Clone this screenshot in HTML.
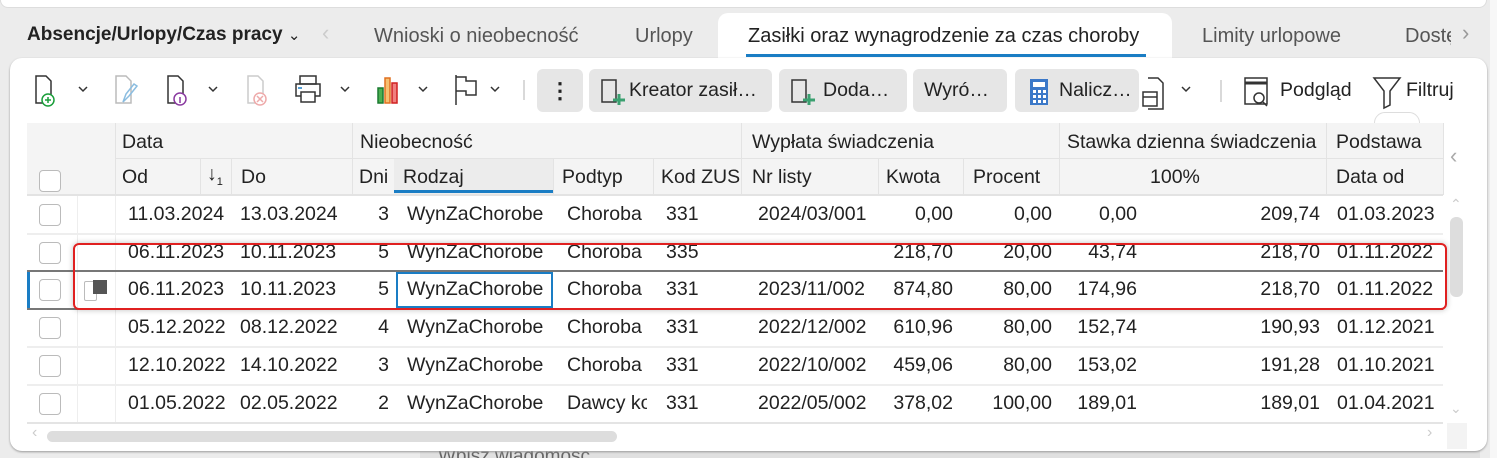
<!DOCTYPE html>
<html><head><meta charset="utf-8"><style>
*{box-sizing:border-box;margin:0;padding:0}
html,body{overflow:hidden}
body{width:1497px;height:458px;background:#ececec;font-family:"Liberation Sans",sans-serif;color:#222;position:relative;overflow:hidden}
.a{position:absolute;white-space:nowrap}
.t{font-size:20px;color:#555}
.h{font-size:19.5px;color:#222}
.d{font-size:19.5px;color:#222}
.r{text-align:right}
.cb{position:absolute;width:22px;height:22px;border:1.5px solid #bbb;border-radius:4px;background:#fff}
.btn{position:absolute;background:#e6e6e6;border-radius:6px;height:43px;top:69px;font-size:19.5px;line-height:43px}
.hl{position:absolute;background:#e3e3e3}
</style></head><body>
<div class="a" style="left:0;top:-10px;width:1487px;height:18px;background:#fff;border:1px solid #ddd;border-radius:8px"></div>
<div class="a" style="left:1490px;top:0;width:7px;height:458px;background:#f7f7f7"></div>
<div class="a" style="left:420px;top:440px;width:1060px;height:18px;background:#e0e0e0"></div>
<div class="a" style="left:438px;top:446px;font-size:19px;color:#666">Wpisz wiadomość</div>
<!-- tabs -->
<div class="a" style="left:27px;top:24px;font-size:19px;font-weight:bold;color:#222">Absencje/Urlopy/Czas pracy <span style="font-weight:normal;font-size:15px">&#8964;</span></div>
<div class="a" style="left:322px;top:20px;font-size:22px;color:#ccc">&#8249;</div>
<div class="a t" style="left:374px;top:25px">Wnioski o nieobecność</div>
<div class="a t" style="left:635px;top:25px">Urlopy</div>
<div class="a" style="left:718px;top:13px;width:454px;height:50px;background:#fff;border-radius:10px 10px 0 0"></div>
<div class="a" style="left:748px;top:25px;font-size:20px;color:#222;width:394px;overflow:hidden">Zasiłki oraz wynagrodzenie za czas choroby</div>
<div class="a" style="left:746px;top:54px;width:400px;height:3px;background:#1a7dc4"></div>
<div class="a t" style="left:1202px;top:25px">Limity urlopowe</div>
<div class="a t" style="left:1405px;top:25px;width:46px;overflow:hidden">Dostęp</div>
<div class="a" style="left:1462px;top:20px;font-size:22px;color:#999">&#8250;</div>
<!-- panel -->
<div class="a" style="left:10px;top:58px;width:1477px;height:393px;background:#fff;border-radius:12px;box-shadow:0 1px 2px #999"></div>
<!-- toolbar icons -->
<svg class="a" style="left:30px;top:70px" width="500" height="40" viewBox="0 0 500 40" fill="none" stroke-width="1.5">
<path d="M6 6h10l5 5v22H6z" stroke="#333"/><circle cx="18" cy="30" r="6" fill="#fff" stroke="#1a9e3a"/><path d="M15 30h6M18 27v6" stroke="#1a9e3a"/>
<path d="M49 17l4 4 4-4" stroke="#333"/>
<path d="M86 6h10l5 5v22H86z" stroke="#bbb"/><path d="M93 32l3-8 8-10 3 2-8 10z" stroke="#8bbde0"/>
<path d="M138 6h10l5 5v22h-15z" stroke="#333"/><circle cx="150" cy="29" r="6" fill="#fff" stroke="#8a3aa0"/><path d="M150 27v6" stroke="#8a3aa0"/>
<path d="M179 17l4 4 4-4" stroke="#333"/>
<path d="M218 6h10l5 5v22h-15z" stroke="#ccc"/><circle cx="230" cy="29" r="6" fill="#fff" stroke="#eaa"/><path d="M227 26l6 6M233 26l-6 6" stroke="#eaa"/>
<rect x="270" y="6" width="16" height="8" stroke="#333"/><rect x="266" y="14" width="24" height="12" stroke="#333"/><rect x="271" y="22" width="14" height="10" fill="#fff" stroke="#333"/><path d="M268 18h4" stroke="#1a7dc4"/>
<path d="M311 17l4 4 4-4" stroke="#333"/>
<rect x="348" y="18" width="5" height="15" fill="#4caf50" stroke="#1a7a30"/><rect x="355" y="8" width="5" height="25" fill="#f6c070" stroke="#e07020"/><rect x="362" y="13" width="5" height="20" fill="#f08080" stroke="#d02020"/>
<path d="M389 17l4 4 4-4" stroke="#333"/>
<path d="M426 5v30M426 7h10v4h10v14h-10v-4h-10" stroke="#333"/>
<path d="M461 17l4 4 4-4" stroke="#333"/>
<path d="M494 10v20" stroke="#ccc"/>
</svg>
<div class="btn" style="left:537px;width:46px;text-align:center;font-size:22px;font-weight:bold">&#8942;</div>
<div class="btn" style="left:589px;width:183px"><svg class="a" style="left:10px;top:9px" width="28" height="28" fill="none" stroke-width="1.5"><path d="M3 2h14v22H3z" stroke="#333"/><path d="M20 16v11M14 22h12" stroke="#3aa070" stroke-width="3"/></svg><span class="a" style="left:40px">Kreator zasił…</span></div>
<div class="btn" style="left:779px;width:128px"><svg class="a" style="left:10px;top:9px" width="28" height="28" fill="none" stroke-width="1.5"><path d="M3 2h14v22H3z" stroke="#333"/><path d="M20 16v11M14 22h12" stroke="#3aa070" stroke-width="3"/></svg><span class="a" style="left:44px">Doda…</span></div>
<div class="btn" style="left:913px;width:94px"><span class="a" style="left:11px">Wyró…</span></div>
<div class="btn" style="left:1015px;width:124px"><svg class="a" style="left:14px;top:9px" width="22" height="28"><rect x="1" y="1" width="18" height="26" fill="#3b78c8"/><rect x="4" y="4" width="12" height="5" fill="#fff"/><g fill="#fff"><rect x="4" y="12" width="3" height="3"/><rect x="9" y="12" width="3" height="3"/><rect x="14" y="12" width="3" height="3"/><rect x="4" y="17" width="3" height="3"/><rect x="9" y="17" width="3" height="3"/><rect x="14" y="17" width="3" height="3"/><rect x="4" y="22" width="3" height="3"/><rect x="9" y="22" width="3" height="3"/><rect x="14" y="22" width="3" height="3"/></g></svg><span class="a" style="left:44px">Nalicz…</span></div>
<svg class="a" style="left:1140px;top:74px" width="340" height="36" fill="none" stroke-width="1.5">
<path d="M8 4h10l5 5v26H8" stroke="#333"/><rect x="3" y="18" width="14" height="14" fill="#fff" stroke="#333"/><path d="M3 23h14" stroke="#333"/>
<path d="M42 13l4 4 4-4" stroke="#333"/>
<path d="M81 6v22" stroke="#ccc"/>
<rect x="105" y="4" width="22" height="26" stroke="#333"/><path d="M105 9h22" stroke="#333" stroke-width="3"/><circle cx="119" cy="24" r="5" fill="#fff" stroke="#333"/><path d="M123 28l4 4" stroke="#333"/>
<path d="M234 4h26l-10 13v14l-6 3V17z" stroke="#333"/>
</svg>
<div class="a" style="left:1280px;top:79px;font-size:19.5px">Podgląd</div>
<div class="a" style="left:1406px;top:79px;font-size:19.5px">Filtruj</div>
<div class="a" style="left:1374px;top:112px;width:46px;height:22px;border:1px solid #ddd;border-radius:11px;background:#fff;text-align:center;font-size:14px;color:#888;line-height:18px">&#8964;</div>
<!-- grid header -->
<div class="hl" style="left:27px;top:123px;width:1416px;height:72px;background:#f4f4f4"></div>
<div class="hl" style="left:115px;top:158px;width:1328px;height:1px"></div>
<div class="hl" style="left:27px;top:194px;width:1416px;height:2px"></div>
<div class="hl" style="left:115px;top:123px;width:1px;height:72px"></div>
<div class="hl" style="left:352px;top:123px;width:1px;height:72px"></div>
<div class="hl" style="left:741px;top:123px;width:1px;height:72px"></div>
<div class="hl" style="left:1059px;top:123px;width:1px;height:72px"></div>
<div class="hl" style="left:1326px;top:123px;width:1px;height:72px"></div>
<div class="hl" style="left:1443px;top:123px;width:1px;height:72px"></div>
<div class="hl" style="left:200px;top:158px;width:1px;height:37px"></div>
<div class="hl" style="left:231px;top:158px;width:1px;height:37px"></div>
<div class="hl" style="left:553px;top:158px;width:1px;height:37px"></div>
<div class="hl" style="left:653px;top:158px;width:1px;height:37px"></div>
<div class="hl" style="left:878px;top:158px;width:1px;height:37px"></div>
<div class="hl" style="left:963px;top:158px;width:1px;height:37px"></div>
<div class="a" style="left:394px;top:159px;width:159px;height:35px;background:#ececec"></div>
<div class="a" style="left:394px;top:190px;width:159px;height:3px;background:#1a7dc4"></div>
<div class="a h" style="left:122px;top:131px">Data</div>
<div class="a h" style="left:360px;top:131px">Nieobecność</div>
<div class="a h" style="left:752px;top:131px">Wypłata świadczenia</div>
<div class="a h" style="left:1067px;top:131px;width:256px;overflow:hidden">Stawka dzienna świadczenia</div>
<div class="a h" style="left:1336px;top:131px">Podstawa</div>
<div class="cb" style="left:39px;top:170px"></div>
<div class="a h" style="left:122px;top:166px">Od</div>
<div class="a h" style="left:207px;top:163px">&#8595;<sub style="font-size:11px">1</sub></div>
<div class="a h" style="left:241px;top:166px">Do</div>
<div class="a h" style="left:359px;top:166px">Dni</div>
<div class="a h" style="left:403px;top:166px">Rodzaj</div>
<div class="a h" style="left:562px;top:166px">Podtyp</div>
<div class="a h" style="left:661px;top:166px;width:80px;overflow:hidden">Kod ZUS</div>
<div class="a h" style="left:752px;top:166px">Nr listy</div>
<div class="a h" style="left:886px;top:166px">Kwota</div>
<div class="a h" style="left:973px;top:166px">Procent</div>
<div class="a h" style="left:1150px;top:166px">100%</div>
<div class="a h" style="left:1336px;top:166px">Data od</div>
<div class="a" style="left:1450px;top:143px;font-size:22px;color:#aaa">&#8249;</div>
<!-- rows -->
<div class="hl" style="left:77px;top:196px;width:1px;height:228px;background:#eee"></div>
<div class="hl" style="left:115px;top:196px;width:1px;height:228px;background:#eee"></div>
<div id="rows"></div>
<div class="hl" style="left:27px;top:233px;width:1416px;height:2px;background:#eee"></div>
<div class="hl" style="left:27px;top:270px;width:1416px;height:2px;background:#777"></div>
<div class="hl" style="left:27px;top:308px;width:1416px;height:2px;background:#777"></div>
<div class="hl" style="left:27px;top:346px;width:1416px;height:2px;background:#eee"></div>
<div class="hl" style="left:27px;top:384px;width:1416px;height:2px;background:#eee"></div>
<div class="hl" style="left:27px;top:422px;width:1416px;height:2px;background:#e4e4e4"></div>
<div class="a" style="left:27px;top:272px;width:3px;height:36px;background:#1a7dc4"></div>
<div class="a" style="left:396px;top:272px;width:157px;height:36px;border:2px solid #1a7dc4"></div>
<div class="a" style="left:84px;top:281px;width:13px;height:20px;border:1px solid #bbb;border-radius:2px"></div>
<div class="a" style="left:93px;top:280px;width:14px;height:14px;background:#555"></div>
<div class="a" style="left:73px;top:243px;width:1374px;height:67px;border:2px solid #e02020;border-radius:6px;box-shadow:0 0 6px rgba(0,0,0,.25)"></div>
<!-- scrollbars -->
<div class="a" style="left:47px;top:431px;width:570px;height:11px;background:#ddd;border-radius:6px"></div>
<div class="a" style="left:32px;top:424px;font-size:16px;color:#ccc">&#8249;</div>
<div class="a" style="left:1427px;top:424px;font-size:16px;color:#ccc">&#8250;</div>
<div class="a" style="left:1447px;top:423px;width:20px;height:26px;background:#f3f3f3"></div>
<div class="a" style="left:1450px;top:217px;width:13px;height:80px;background:#ddd;border-radius:6px"></div>
<div class="a" style="left:1450px;top:196px;font-size:14px;color:#ccc">&#8963;</div>
<div class="a" style="left:1450px;top:400px;font-size:14px;color:#ccc">&#8964;</div>
<script>
var R=[["11.03.2024","13.03.2024","3","WynZaChorobe","Choroba","331","2024/03/001","0,00","0,00","0,00","209,74","01.03.2023"],
["06.11.2023","10.11.2023","5","WynZaChorobe","Choroba","335","","218,70","20,00","43,74","218,70","01.11.2022"],
["06.11.2023","10.11.2023","5","WynZaChorobe","Choroba","331","2023/11/002","874,80","80,00","174,96","218,70","01.11.2022"],
["05.12.2022","08.12.2022","4","WynZaChorobe","Choroba","331","2022/12/002","610,96","80,00","152,74","190,93","01.12.2021"],
["12.10.2022","14.10.2022","3","WynZaChorobe","Choroba","331","2022/10/002","459,06","80,00","153,02","191,28","01.10.2021"],
["01.05.2022","02.05.2022","2","WynZaChorobe","Dawcy ko","331","2022/05/002","378,02","100,00","189,01","189,01","01.04.2021"]];
var T=[197,235,272,310,348,386],h="";
R.forEach(function(r,i){var y=T[i]+6;
h+='<div class="cb" style="left:39px;top:'+(T[i]+7)+'px"></div>';
function L(x,s,w){h+='<div class="a d" style="left:'+x+'px;top:'+y+'px'+(w?';width:'+w+'px;overflow:hidden':'')+'">'+s+'</div>'}
function Rt(x,s){h+='<div class="a d r" style="right:'+(1497-x)+'px;top:'+y+'px">'+s+'</div>'}
L(128,r[0]);L(240,r[1]);Rt(389,r[2]);L(407,r[3],142);L(567,r[4],80);L(666,r[5]);L(758,r[6],118);Rt(953,r[7]);Rt(1052,r[8]);Rt(1137,r[9]);Rt(1320,r[10]);L(1337,r[11],105);});
document.getElementById("rows").innerHTML=h;
</script>
</body></html>
